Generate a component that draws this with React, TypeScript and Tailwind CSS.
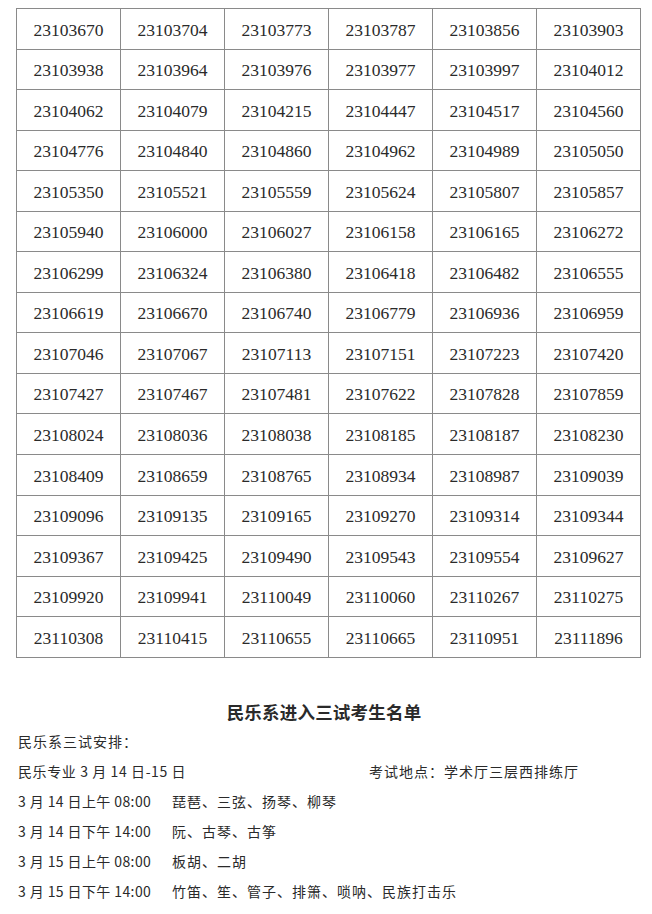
import React from 'react';

const rows: string[][] = [
  ['23103670', '23103704', '23103773', '23103787', '23103856', '23103903'],
  ['23103938', '23103964', '23103976', '23103977', '23103997', '23104012'],
  ['23104062', '23104079', '23104215', '23104447', '23104517', '23104560'],
  ['23104776', '23104840', '23104860', '23104962', '23104989', '23105050'],
  ['23105350', '23105521', '23105559', '23105624', '23105807', '23105857'],
  ['23105940', '23106000', '23106027', '23106158', '23106165', '23106272'],
  ['23106299', '23106324', '23106380', '23106418', '23106482', '23106555'],
  ['23106619', '23106670', '23106740', '23106779', '23106936', '23106959'],
  ['23107046', '23107067', '23107113', '23107151', '23107223', '23107420'],
  ['23107427', '23107467', '23107481', '23107622', '23107828', '23107859'],
  ['23108024', '23108036', '23108038', '23108185', '23108187', '23108230'],
  ['23108409', '23108659', '23108765', '23108934', '23108987', '23109039'],
  ['23109096', '23109135', '23109165', '23109270', '23109314', '23109344'],
  ['23109367', '23109425', '23109490', '23109543', '23109554', '23109627'],
  ['23109920', '23109941', '23110049', '23110060', '23110267', '23110275'],
  ['23110308', '23110415', '23110655', '23110665', '23110951', '23111896'],
];

const schedule = [
  ['3 月 14 日上午 08:00', '琵琶、三弦、扬琴、柳琴'],
  ['3 月 14 日下午 14:00', '阮、古琴、古筝'],
  ['3 月 15 日上午 08:00', '板胡、二胡'],
  ['3 月 15 日下午 14:00', '竹笛、笙、管子、排箫、唢呐、民族打击乐'],
];

const cjk = "font-['Noto_Sans_CJK_SC',sans-serif]";

export default function App() {
  return (
    <div className="w-[652px] h-[914px] bg-white overflow-hidden">
      <div className="pt-[8px] pl-[16px]">
        <table className="border-collapse w-[625px] table-fixed font-['Liberation_Serif','Noto_Sans_CJK_SC',serif] text-[17.5px] text-[#2a2a2a]">
          <tbody>
            {rows.map((r, i) => (
              <tr key={i} className="h-[40.56px]">
                {r.map((c) => (
                  <td key={c} className="border border-[#8a8a8a] text-center align-middle pt-[3px] leading-none">
                    {c}
                  </td>
                ))}
              </tr>
            ))}
          </tbody>
        </table>
      </div>

      <div className={`${cjk} text-[#2a2a2a]`}>
        <h2 className="mt-[45px] text-center text-[17.5px] font-bold leading-none pr-[4px] tracking-[0.2px]">
          民乐系进入三试考生名单
        </h2>
        <div className="pl-[18px] mt-[6px] text-[14px] leading-[30px]">
          <p className="tracking-[1px]">民乐系三试安排：</p>
          <div className="flex">
            <span className="w-[351px] tracking-[0.6px]">民乐专业 3 月 14 日-15 日</span>
            <span className="tracking-[1px]">考试地点：学术厅三层西排练厅</span>
          </div>
          {schedule.map(([t, s]) => (
            <div key={t} className="flex">
              <span className="w-[154px] tracking-[0.4px]">{t}</span>
              <span className="tracking-[1px]">{s}</span>
            </div>
          ))}
        </div>
      </div>
    </div>
  );
}
